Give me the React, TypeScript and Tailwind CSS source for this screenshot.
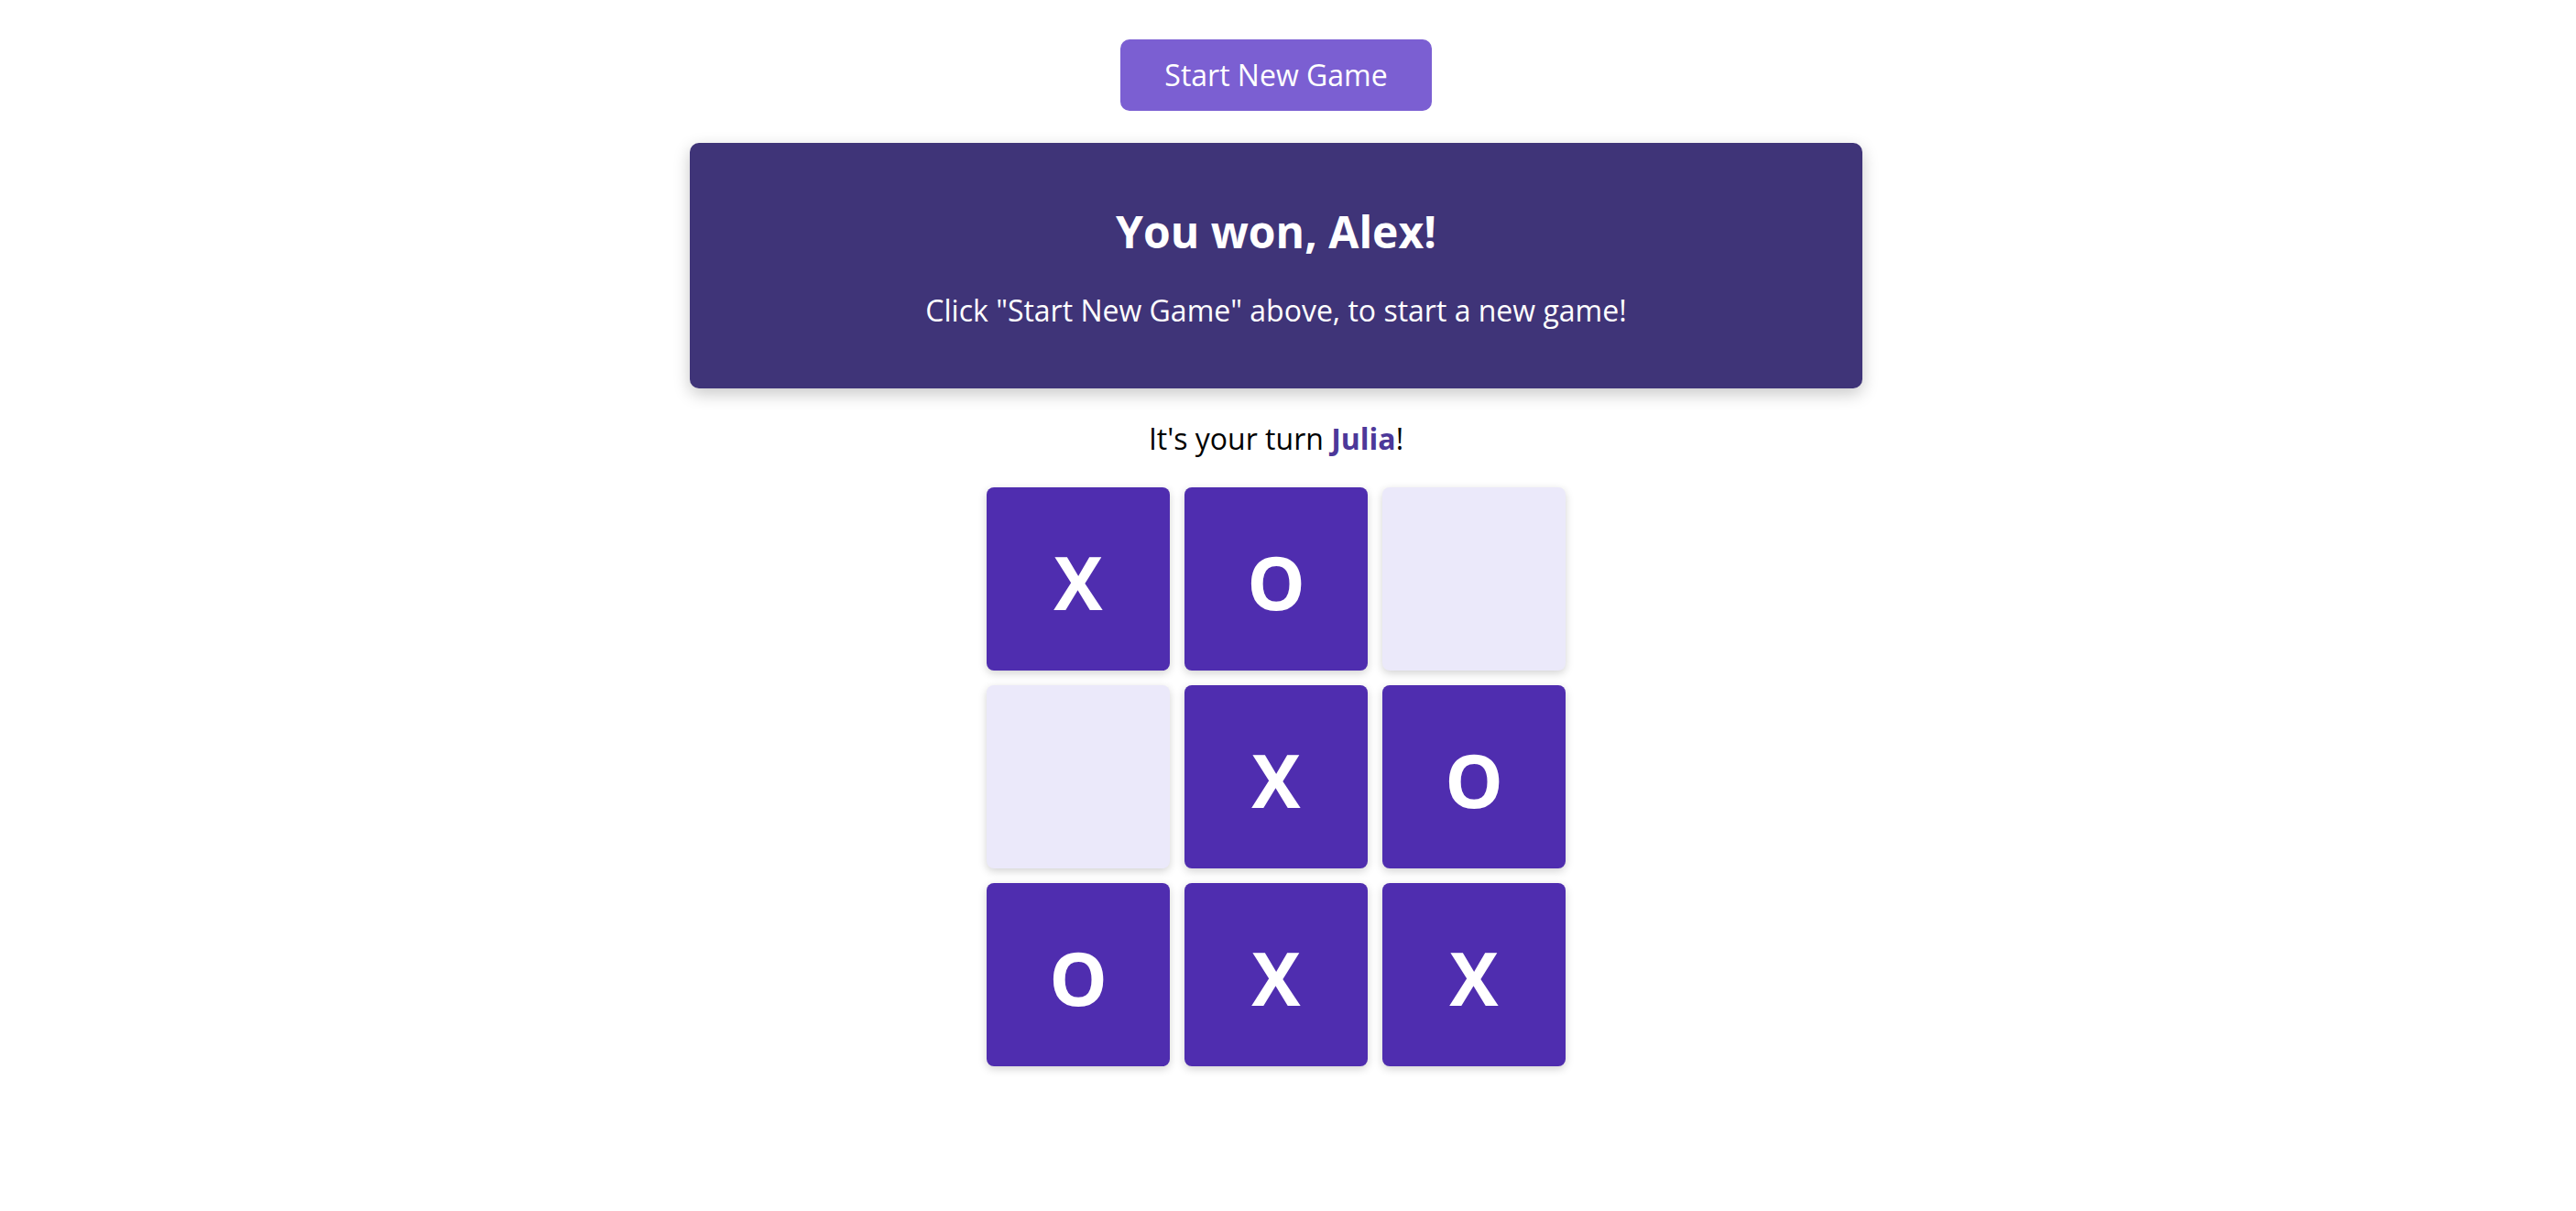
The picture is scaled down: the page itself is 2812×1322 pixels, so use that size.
import React from 'react';

type Mark = 'X' | 'O' | null;

const board: Mark[] = ['X', 'O', null, null, 'X', 'O', 'O', 'X', 'X'];

const Cell = ({ mark }: { mark: Mark }) => (
  <div
    className={`w-[200px] h-[200px] rounded-[8px] flex items-center justify-center shadow-[0_3px_10px_rgba(0,0,0,0.18)] ${
      mark ? 'bg-[#4f2daf]' : 'bg-[#ebe9fa]'
    }`}
  >
    {mark && <span className="text-[80px] leading-none font-bold text-white pt-[6px]">{mark}</span>}
  </div>
);

export default function App() {
  return (
    <div
      className="min-h-screen bg-white flex flex-col items-center pt-[43px] pr-[26px]"
      style={{ fontFamily: '"Open Sans", "Noto Sans", sans-serif' }}
    >
      <button className="bg-[#7b5fd2] text-white text-[32px] leading-[48px] px-[48px] py-[15px] rounded-[10px]">
        Start New Game
      </button>

      {/* Result banner */}
      <div className="mt-[35px] w-[1280px] bg-[#3f3478] rounded-[10px] shadow-[0_6px_18px_rgba(0,0,0,0.22)] py-[61px] flex flex-col items-center text-white">
        <h2 className="text-[48px] leading-[72px] font-bold">You won, Alex!</h2>
        <p className="mt-[26px] text-[32px] leading-[48px]">Click "Start New Game" above, to start a new game!</p>
      </div>

      <p className="mt-[31px] text-[32px] leading-[48px] text-black">
        It's your turn <span className="font-bold text-[#4c3899]">Julia</span>!
      </p>

      <div className="mt-[29px] grid grid-cols-3 gap-[16px]">
        {board.map((m, i) => (
          <Cell key={i} mark={m} />
        ))}
      </div>
    </div>
  );
}
